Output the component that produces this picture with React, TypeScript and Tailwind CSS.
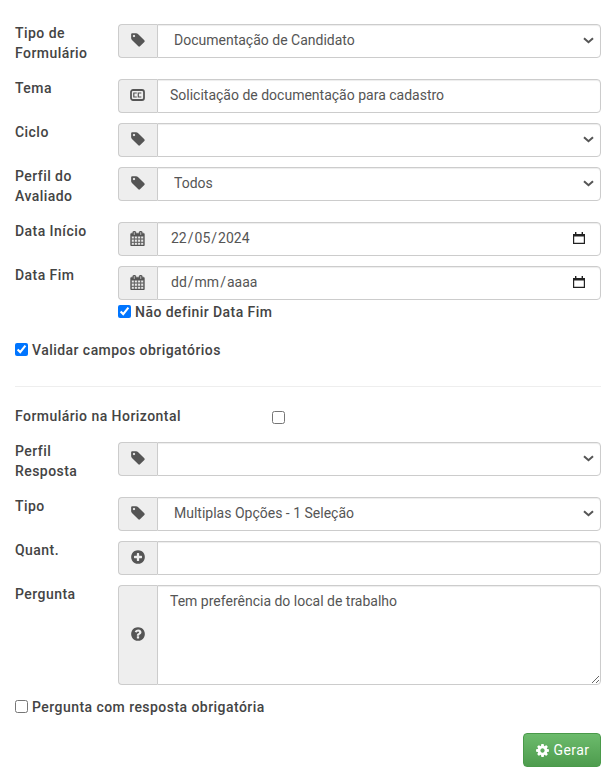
import type { ReactNode } from "react";

const CONTROL =
  "h-[34px] w-full min-w-0 rounded-r-[4px] border border-[#ccc] bg-white pb-[2px] text-[14px] text-[#555] shadow-[inset_0_1px_1px_rgba(0,0,0,0.075)] outline-none";

// font awesome 4 glyphs, 1792 grid
const TAG =
  "M576 448q0-53-37.5-90.5t-90.5-37.500-90.500 37.500-37.500 90.500 37.500 90.500 90.500 37.500 90.500-37.500 37.500-90.500zm1067 576q0 53-37 90l-491 492q-39 37-91 37-53 0-90-37l-715-716q-38-37-64.500-101t-26.500-117v-416q0-52 38-90t90-38h416q53 0 117 26.500t102 64.500l715 714q37 39 37 91z";
const CALENDAR =
  "M192 1664h288v-288h-288v288zm352 0h320v-288h-320v288zm-352-352h288v-320h-288v320zm352 0h320v-320h-320v320zm-352-384h288v-288h-288v288zm736 736h320v-288h-320v288zm-384-736h320v-288h-320v288zm768 736h288v-288h-288v288zm-384-352h320v-320h-320v320zm-352-864v-288q0-13-9.500-22.500t-22.500-9.500h-64q-13 0-22.500 9.500t-9.500 22.500v288q0 13 9.500 22.500t22.500 9.500h64q13 0 22.500-9.500t9.500-22.500zm736 864h288v-320h-288v320zm-384-384h320v-288h-320v288zm384 0h288v-288h-288v288zm32-480v-288q0-13-9.500-22.500t-22.500-9.500h-64q-13 0-22.500 9.500t-9.500 22.500v288q0 13 9.500 22.500t22.500 9.500h64q13 0 22.500-9.500t9.500-22.500zm384-64v1280q0 52-38 90t-90 38h-1408q-52 0-90-38t-38-90v-1280q0-52 38-90t90-38h128v-96q0-66 47-113t113-47h64q66 0 113 47t47 113v96h384v-96q0-66 47-113t113-47h64q66 0 113 47t47 113v96h128q52 0 90 38t38 90z";
const PLUS_CIRCLE =
  "M1344 960v-128q0-26-19-45t-45-19h-256v-256q0-26-19-45t-45-19h-128q-26 0-45 19t-19 45v256h-256q-26 0-45 19t-19 45v128q0 26 19 45t45 19h256v256q0 26 19 45t45 19h128q26 0 45-19t19-45v-256h256q26 0 45-19t19-45zm320-64q0 209-103 385.500t-279.500 279.500-385.500 103-385.500-103-279.500-279.500-103-385.500 103-385.500 279.500-279.500 385.500-103 385.500 103 279.500 279.500 103 385.500z";
const QUESTION_CIRCLE =
  "M1024 1376v-192q0-14-9-23t-23-9h-192q-14 0-23 9t-9 23v192q0 14 9 23t23 9h192q14 0 23-9t9-23zm256-672q0-88-55.500-163t-138.500-116-170-41q-243 0-371 213-15 24 8 42l132 100q7 6 19 6 16 0 25-12 53-68 86-92 34-24 86-24 48 0 85.500 26t37.500 59q0 38-20 61t-68 45q-63 28-115.500 86.500t-52.500 125.500v36q0 14 9 23t23 9h192q14 0 23-9t9-23q0-19 21.500-49.500t54.500-49.500q32-18 49-28.500t46-35 44.500-48 28-60.500 12.500-81zm384 192q0 209-103 385.500t-279.500 279.500-385.500 103-385.500-103-279.500-279.500-103-385.500 103-385.500 279.500-279.500 385.500-103 385.500 103 279.500 279.500 103 385.500z";
const COG =
  "M1152 896q0-106-75-181t-181-75-181 75-75 181 75 181 181 75 181-75 75-181zm512-109v222q0 12-8 23t-20 13l-185 28q-19 54-39 91 35 50 107 138 10 12 10 25t-9 23q-27 37-99 108t-94 71q-12 0-26-9l-138-108q-44 23-91 38-16 136-29 186-7 28-36 28h-222q-14 0-24.500-8.500t-11.500-21.500l-28-184q-49-16-90-37l-141 107q-10 9-25 9-14 0-25-11-126-114-165-168-7-10-7-23 0-12 8-23 15-21 51-66.500t54-70.500q-27-50-41-99l-183-27q-13-2-21-12.500t-8-23.500v-222q0-12 8-23t19-13l186-28q14-46 39-92-40-57-107-138-10-12-10-24 0-10 9-23 26-36 98.500-107.500t94.500-71.500q13 0 26 10l138 107q44-23 91-38 16-136 29-186 7-28 36-28h222q14 0 24.500 8.500t11.500 21.500l28 184q49 16 90 37l142-107q9-9 24-9 13 0 25 10 129 119 165 170 7 8 7 22 0 12-8 23-15 21-51 66.500t-54 70.500q26 50 41 98l183 28q13 2 21 12.500t8 23.500z";

function Fa({ d, size = 16, bold }: { d: string; size?: number; bold?: boolean }) {
  return (
    <svg
      width={size}
      height={size}
      viewBox="0 0 1792 1792"
      fill="currentColor"
      stroke={bold ? "currentColor" : undefined}
      strokeWidth={bold ? 50 : undefined}
    >
      <path d={d} />
    </svg>
  );
}

function CcIcon() {
  return (
    <svg width="15" height="12" viewBox="0 0 15 12" fill="none" stroke="currentColor">
      <rect x="1" y="1" width="13" height="10" rx="2" strokeWidth="1.800" />
      <path d="M6.800 4H3.800V8H6.800M11.300 4H8.300V8H11.300" strokeWidth="1.200" />
    </svg>
  );
}

function Addon({ children }: { children: ReactNode }) {
  return (
    <span className="flex w-[39px] shrink-0 items-center justify-center rounded-l-[4px] border border-r-0 border-[#ccc] bg-[#eee] pr-px pb-[2px] text-[#555]">
      {children}
    </span>
  );
}

function Row({ label, icon, children }: { label: ReactNode; icon: ReactNode; children: ReactNode }) {
  return (
    <div className="mb-[10px] flex items-start">
      <label className="-mt-px w-[103px] shrink-0 pr-4 pb-[6px] text-[14px] leading-5 font-medium tracking-[0.45px]">
        {label}
      </label>
      <div className="flex min-w-0 flex-1">
        <Addon>{icon}</Addon>
        {children}
      </div>
    </div>
  );
}

function Select({ value }: { value?: string }) {
  return (
    <div className="relative min-w-0 flex-1">
      <select className={`${CONTROL} appearance-none pr-8 pl-4`}>
        <option>{value}</option>
      </select>
      <svg
        className="pointer-events-none absolute top-[13px] right-[7px] text-[#555]"
        width="11"
        height="7"
        viewBox="0 0 11 7"
        fill="none"
        stroke="currentColor"
        strokeWidth="2"
      >
        <path d="M1 1.200L5.500 5.200L10 1.200" />
      </svg>
    </div>
  );
}

function DateField({ parts }: { parts: string[] }) {
  return (
    <div className={`${CONTROL} flex flex-1 items-center justify-between pr-[15px] pl-3`}>
      <span className="flex">
        {parts.map((p, i) => (
          <span key={p} className="flex">
            {i > 0 && <span>/</span>}
            <span className="px-px">{p}</span>
          </span>
        ))}
      </span>
      <svg width="12" height="12" viewBox="0 0 12 12" fill="none" stroke="#222">
        <path d="M.6 2.500H11.400V11.400H.6Z" strokeWidth="1.200" />
        <path d="M0 3.500H12" strokeWidth="2" />
        <path d="M2.700 0V2M9.300 0V2" strokeWidth="1.400" />
      </svg>
    </div>
  );
}

function Check({ label, checked }: { label: string; checked?: boolean }) {
  return (
    <label className="flex h-5 items-center text-[14px] leading-5 font-medium tracking-[0.45px]">
      <input type="checkbox" defaultChecked={checked} className="mr-1 -mt-0.5 h-[13px] w-[13px]" />
      {label}
    </label>
  );
}

export default function App() {
  return (
    <div
      className="min-h-[777px] bg-white pt-6 pr-3 pl-[15px] text-[#444]"
      style={{ fontFamily: "Roboto, sans-serif" }}
    >
      <Row label="Tipo de Formulário" icon={<Fa d={TAG} />}>
        <Select value="Documentação de Candidato" />
      </Row>
      <Row label="Tema" icon={<CcIcon />}>
        <input className={`${CONTROL} flex-1 px-3`} defaultValue="Solicitação de documentação para cadastro" />
      </Row>
      <Row label="Ciclo" icon={<Fa d={TAG} />}>
        <Select />
      </Row>
      <Row label="Perfil do Avaliado" icon={<Fa d={TAG} />}>
        <Select value="Todos" />
      </Row>
      <Row label="Data Início" icon={<Fa d={CALENDAR} size={15} bold />}>
        <DateField parts={["22", "05", "2024"]} />
      </Row>
      <Row label="Data Fim" icon={<Fa d={CALENDAR} size={15} bold />}>
        <DateField parts={["dd", "mm", "aaaa"]} />
      </Row>
      <div className="-mt-2 ml-[103px]">
        <Check label="Não definir Data Fim" checked />
      </div>
      <div className="mt-[18px]">
        <Check label="Validar campos obrigatórios" checked />
      </div>
      <hr className="mt-[26px] mb-5 border-t border-[#eee]" />
      <div className="mb-[15px] flex h-5 items-center text-[14px] leading-5 font-medium tracking-[0.45px]">
        <span className="-mt-0.5 w-[257px]">Formulário na Horizontal</span>
        <input type="checkbox" className="h-[13px] w-[13px]" />
      </div>
      <Row label="Perfil Resposta" icon={<Fa d={TAG} />}>
        <Select />
      </Row>
      <Row label="Tipo" icon={<Fa d={TAG} />}>
        <Select value="Multiplas Opções - 1 Seleção" />
      </Row>
      <Row label="Quant." icon={<Fa d={PLUS_CIRCLE} />}>
        <input className={`${CONTROL} flex-1 px-3`} />
      </Row>
      <Row label="Pergunta" icon={<Fa d={QUESTION_CIRCLE} />}>
        <textarea
          className="h-[100px] min-w-0 flex-1 rounded-r-[4px] border border-[#ccc] bg-white px-3 pt-[5px] text-[14px] leading-5 text-[#555] shadow-[inset_0_1px_1px_rgba(0,0,0,0.075)] outline-none"
          defaultValue="Tem preferência do local de trabalho"
        />
      </Row>
      <div className="mt-3">
        <Check label="Pergunta com resposta obrigatória" />
      </div>
      <div className="mt-4 flex justify-end">
        <button className="flex h-[34px] w-[78px] items-center justify-center gap-1 rounded-[4px] border border-[#4a9a4a] bg-gradient-to-b from-[#6cbb6c] to-[#4e9c4e] text-[14px] tracking-[0.4px] text-white">
          <Fa d={COG} size={15} />
          Gerar
        </button>
      </div>
    </div>
  );
}
